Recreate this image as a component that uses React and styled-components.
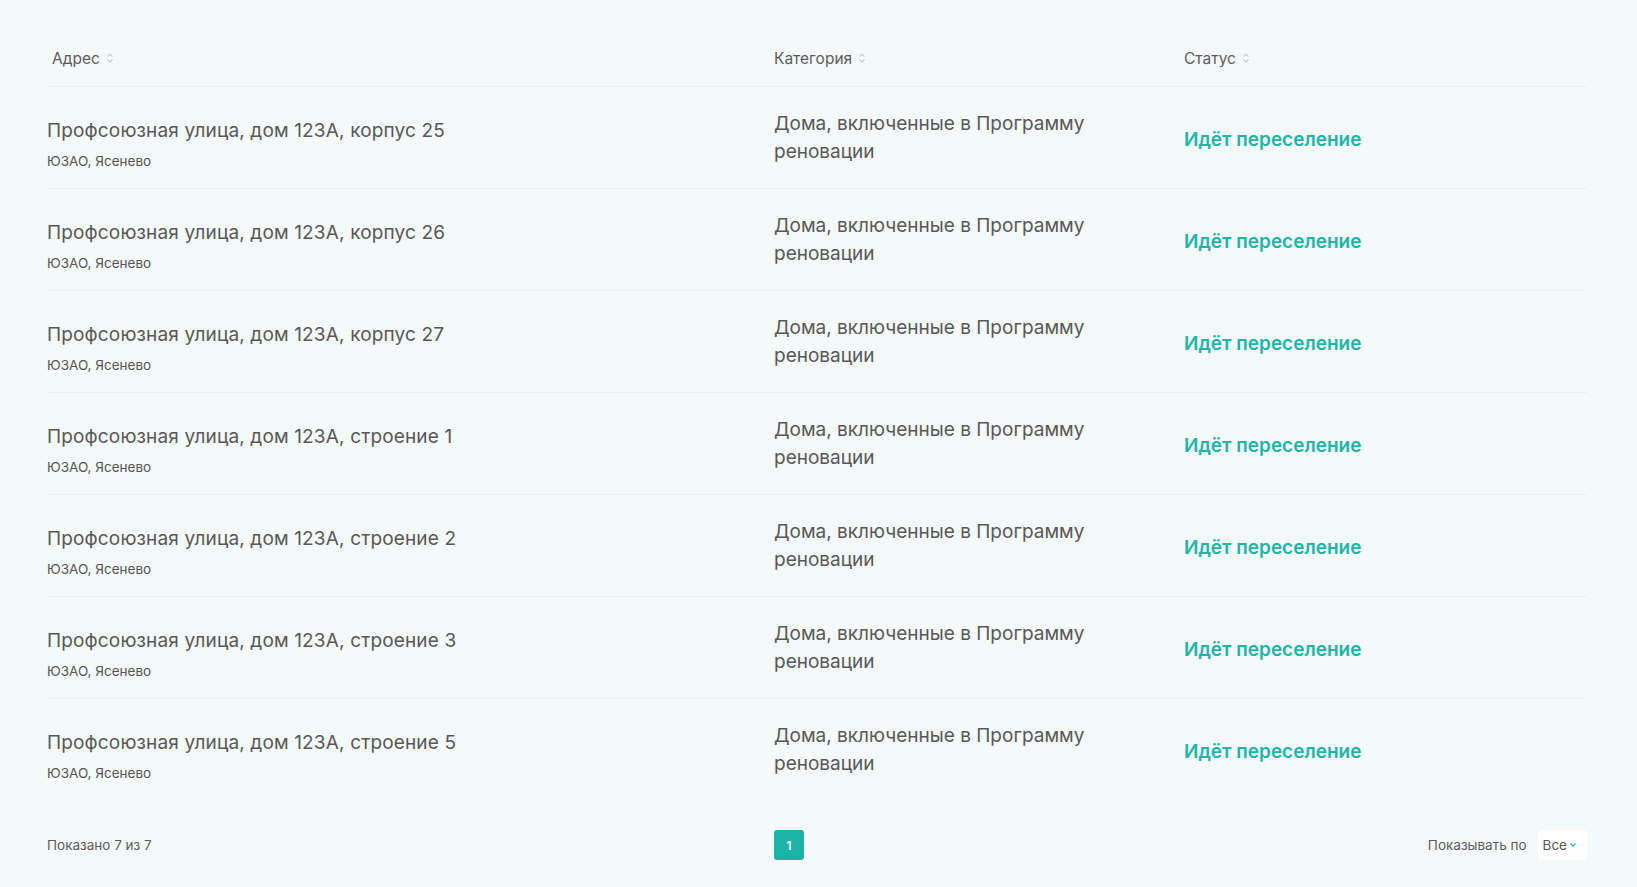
import React from "react";
import styled, { createGlobalStyle } from "styled-components";

const GlobalStyle = createGlobalStyle`
  html, body {
    margin: 0;
    padding: 0;
    background-color: #f4f9f9;
    font-family: "Inter", "Noto Sans", sans-serif;
    color: #585858;
  }
`;

const COLS = "727px 410px 1fr";

const StyledPage = styled.div`
  min-height: 100vh;
  box-sizing: border-box;
  padding: 30px 50px 0 47px;
  background-color: #f4f9f9;
`;

const HeadRow = styled.div`
  display: grid;
  grid-template-columns: ${COLS};
  height: 56px;
  align-items: center;
  border-bottom: 1px solid #e6f2f1;
`;

const HeadCell = styled.div`
  display: flex;
  align-items: center;
  gap: 6px;
  padding-left: ${(p) => (p.$first ? "5px" : "0")};
  font-size: 15.5px;
  color: #5c5c5c;
`;

const Row = styled.div`
  display: grid;
  grid-template-columns: ${COLS};
  height: 101px;
  align-items: center;
  border-bottom: ${(p) => (p.$last ? "1px solid transparent" : "1px solid #e6f2f1")};
`;

const AddressCell = styled.div`
  display: flex;
  flex-direction: column;
  gap: 10px;
  padding-top: 12px;
`;

const Title = styled.div`
  font-size: 19px;
  line-height: 24px;
  letter-spacing: 0.15px;
  color: #585858;
`;

const Sub = styled.div`
  font-size: 13.5px;
  line-height: 16px;
  color: #555;
`;

const Category = styled.div`
  font-size: 19px;
  line-height: 28px;
  color: #585858;
  max-width: 340px;
`;

const Status = styled.div`
  font-size: 19px;
  font-weight: 600;
  color: #1fb5a8;
  padding-top: 4px;
`;

const Footer = styled.div`
  display: grid;
  grid-template-columns: ${COLS};
  align-items: center;
  padding-top: 29px;
  font-size: 13.5px;
  color: #5c5c5c;
`;

const PageBtn = styled.button`
  width: 30px;
  height: 30px;
  border: none;
  border-radius: 3px;
  background-color: #1ab3a6;
  color: #fff;
  font-family: inherit;
  font-size: 12px;
  font-weight: 600;
  padding: 0;
`;

const PerPage = styled.div`
  display: flex;
  align-items: center;
  justify-content: flex-end;
  gap: 11px;
`;

const Select = styled.div`
  display: flex;
  align-items: center;
  gap: 2px;
  height: 30px;
  padding: 0 10px 0 5px;
  background-color: #fff;
  border-radius: 4px;
  font-size: 13.5px;
  color: #555;
`;

const SortIcon = () => (
  <svg width="8" height="12" viewBox="0 0 8 12" fill="none" stroke="#c4cccc" strokeWidth="1.1">
    <path d="M1.5 4.5L4 2l2.5 2.5" />
    <path d="M1.5 7.5L4 10l2.5-2.5" />
  </svg>
);

const Chevron = () => (
  <svg width="8" height="6" viewBox="0 0 8 6" fill="none" stroke="#2bbcae" strokeWidth="1.3">
    <path d="M1.5 1.5L4 4l2.5-2.5" />
  </svg>
);

const rows = [
  "корпус 25",
  "корпус 26",
  "корпус 27",
  "строение 1",
  "строение 2",
  "строение 3",
  "строение 5",
];

export default function App() {
  return (
    <StyledPage>
      <GlobalStyle />
      <HeadRow>
        <HeadCell $first>
          Адрес <SortIcon />
        </HeadCell>
        <HeadCell>
          Категория <SortIcon />
        </HeadCell>
        <HeadCell>
          Статус <SortIcon />
        </HeadCell>
      </HeadRow>
      {rows.map((r, i) => (
        <Row key={r} $last={i === rows.length - 1}>
          <AddressCell>
            <Title>Профсоюзная улица, дом 123А, {r}</Title>
            <Sub>ЮЗАО, Ясенево</Sub>
          </AddressCell>
          <Category>Дома, включенные в Программу реновации</Category>
          <Status>Идёт переселение</Status>
        </Row>
      ))}
      <Footer>
        <div>Показано 7 из 7</div>
        <div>
          <PageBtn>1</PageBtn>
        </div>
        <PerPage>
          Показывать по
          <Select>
            Все <Chevron />
          </Select>
        </PerPage>
      </Footer>
    </StyledPage>
  );
}
